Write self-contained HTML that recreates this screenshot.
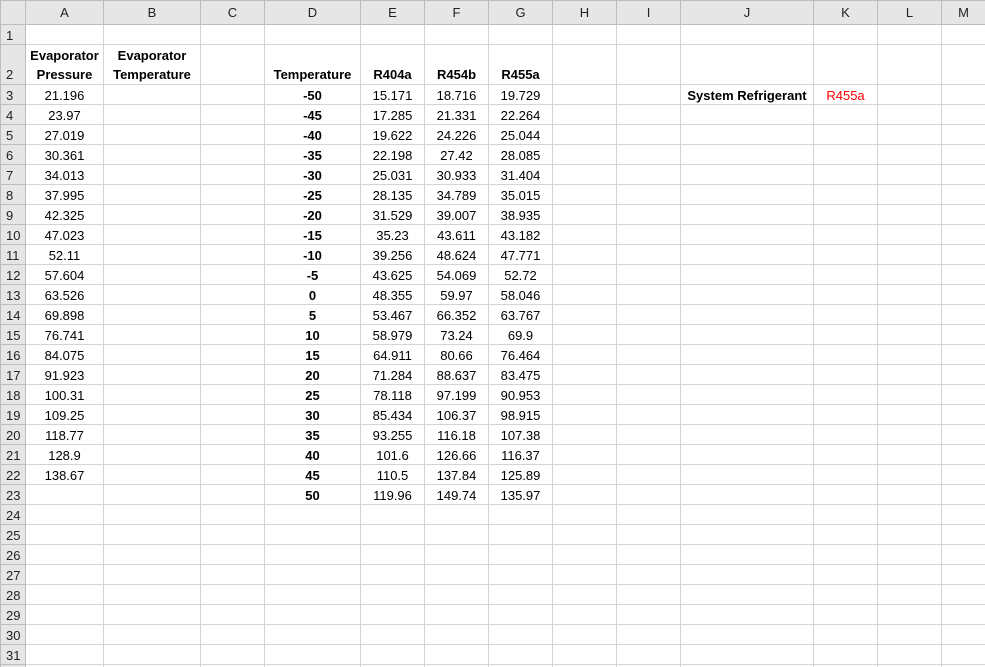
<!DOCTYPE html>
<html><head><meta charset="utf-8"><style>
html,body{margin:0;padding:0;background:#fff;overflow:hidden;width:985px;height:667px}
table{border-collapse:collapse;table-layout:fixed;width:985px;font-family:"Liberation Sans",Arial,sans-serif;font-size:13px;color:#000}
td{border:1px solid #d4d4d4;padding:0 2px;height:19px;text-align:center;vertical-align:bottom;white-space:nowrap;overflow:hidden;line-height:17px}
tr.h td{background:#e6e6e6;border-color:#bdbdbd;height:23px;vertical-align:middle;color:#222}
td.r{background:#e6e6e6;border-color:#bdbdbd;text-align:left;padding-left:5px;color:#222}
tr.t td{height:39px;line-height:19px}
.b{font-weight:bold}
.red{color:#f00}
</style></head><body>
<table>
<colgroup><col style="width:25px"><col style="width:78px"><col style="width:97px"><col style="width:64px"><col style="width:96px"><col style="width:64px"><col style="width:64px"><col style="width:64px"><col style="width:64px"><col style="width:64px"><col style="width:133px"><col style="width:64px"><col style="width:64px"><col style="width:44px"></colgroup>
<tr class="h"><td></td><td>A</td><td>B</td><td>C</td><td>D</td><td>E</td><td>F</td><td>G</td><td>H</td><td>I</td><td>J</td><td>K</td><td>L</td><td>M</td></tr>
<tr><td class="r">1</td><td></td><td></td><td></td><td></td><td></td><td></td><td></td><td></td><td></td><td></td><td></td><td></td><td></td></tr>
<tr class="t"><td class="r">2</td><td class="b">Evaporator<br>Pressure</td><td class="b">Evaporator<br>Temperature</td><td></td><td class="b">Temperature</td><td class="b">R404a</td><td class="b">R454b</td><td class="b">R455a</td><td></td><td></td><td></td><td></td><td></td><td></td></tr>
<tr><td class="r">3</td><td>21.196</td><td></td><td></td><td class="b">-50</td><td>15.171</td><td>18.716</td><td>19.729</td><td></td><td></td><td class="b">System Refrigerant</td><td class="red">R455a</td><td></td><td></td></tr>
<tr><td class="r">4</td><td>23.97</td><td></td><td></td><td class="b">-45</td><td>17.285</td><td>21.331</td><td>22.264</td><td></td><td></td><td></td><td></td><td></td><td></td></tr>
<tr><td class="r">5</td><td>27.019</td><td></td><td></td><td class="b">-40</td><td>19.622</td><td>24.226</td><td>25.044</td><td></td><td></td><td></td><td></td><td></td><td></td></tr>
<tr><td class="r">6</td><td>30.361</td><td></td><td></td><td class="b">-35</td><td>22.198</td><td>27.42</td><td>28.085</td><td></td><td></td><td></td><td></td><td></td><td></td></tr>
<tr><td class="r">7</td><td>34.013</td><td></td><td></td><td class="b">-30</td><td>25.031</td><td>30.933</td><td>31.404</td><td></td><td></td><td></td><td></td><td></td><td></td></tr>
<tr><td class="r">8</td><td>37.995</td><td></td><td></td><td class="b">-25</td><td>28.135</td><td>34.789</td><td>35.015</td><td></td><td></td><td></td><td></td><td></td><td></td></tr>
<tr><td class="r">9</td><td>42.325</td><td></td><td></td><td class="b">-20</td><td>31.529</td><td>39.007</td><td>38.935</td><td></td><td></td><td></td><td></td><td></td><td></td></tr>
<tr><td class="r">10</td><td>47.023</td><td></td><td></td><td class="b">-15</td><td>35.23</td><td>43.611</td><td>43.182</td><td></td><td></td><td></td><td></td><td></td><td></td></tr>
<tr><td class="r">11</td><td>52.11</td><td></td><td></td><td class="b">-10</td><td>39.256</td><td>48.624</td><td>47.771</td><td></td><td></td><td></td><td></td><td></td><td></td></tr>
<tr><td class="r">12</td><td>57.604</td><td></td><td></td><td class="b">-5</td><td>43.625</td><td>54.069</td><td>52.72</td><td></td><td></td><td></td><td></td><td></td><td></td></tr>
<tr><td class="r">13</td><td>63.526</td><td></td><td></td><td class="b">0</td><td>48.355</td><td>59.97</td><td>58.046</td><td></td><td></td><td></td><td></td><td></td><td></td></tr>
<tr><td class="r">14</td><td>69.898</td><td></td><td></td><td class="b">5</td><td>53.467</td><td>66.352</td><td>63.767</td><td></td><td></td><td></td><td></td><td></td><td></td></tr>
<tr><td class="r">15</td><td>76.741</td><td></td><td></td><td class="b">10</td><td>58.979</td><td>73.24</td><td>69.9</td><td></td><td></td><td></td><td></td><td></td><td></td></tr>
<tr><td class="r">16</td><td>84.075</td><td></td><td></td><td class="b">15</td><td>64.911</td><td>80.66</td><td>76.464</td><td></td><td></td><td></td><td></td><td></td><td></td></tr>
<tr><td class="r">17</td><td>91.923</td><td></td><td></td><td class="b">20</td><td>71.284</td><td>88.637</td><td>83.475</td><td></td><td></td><td></td><td></td><td></td><td></td></tr>
<tr><td class="r">18</td><td>100.31</td><td></td><td></td><td class="b">25</td><td>78.118</td><td>97.199</td><td>90.953</td><td></td><td></td><td></td><td></td><td></td><td></td></tr>
<tr><td class="r">19</td><td>109.25</td><td></td><td></td><td class="b">30</td><td>85.434</td><td>106.37</td><td>98.915</td><td></td><td></td><td></td><td></td><td></td><td></td></tr>
<tr><td class="r">20</td><td>118.77</td><td></td><td></td><td class="b">35</td><td>93.255</td><td>116.18</td><td>107.38</td><td></td><td></td><td></td><td></td><td></td><td></td></tr>
<tr><td class="r">21</td><td>128.9</td><td></td><td></td><td class="b">40</td><td>101.6</td><td>126.66</td><td>116.37</td><td></td><td></td><td></td><td></td><td></td><td></td></tr>
<tr><td class="r">22</td><td>138.67</td><td></td><td></td><td class="b">45</td><td>110.5</td><td>137.84</td><td>125.89</td><td></td><td></td><td></td><td></td><td></td><td></td></tr>
<tr><td class="r">23</td><td></td><td></td><td></td><td class="b">50</td><td>119.96</td><td>149.74</td><td>135.97</td><td></td><td></td><td></td><td></td><td></td><td></td></tr>
<tr><td class="r">24</td><td></td><td></td><td></td><td></td><td></td><td></td><td></td><td></td><td></td><td></td><td></td><td></td><td></td></tr>
<tr><td class="r">25</td><td></td><td></td><td></td><td></td><td></td><td></td><td></td><td></td><td></td><td></td><td></td><td></td><td></td></tr>
<tr><td class="r">26</td><td></td><td></td><td></td><td></td><td></td><td></td><td></td><td></td><td></td><td></td><td></td><td></td><td></td></tr>
<tr><td class="r">27</td><td></td><td></td><td></td><td></td><td></td><td></td><td></td><td></td><td></td><td></td><td></td><td></td><td></td></tr>
<tr><td class="r">28</td><td></td><td></td><td></td><td></td><td></td><td></td><td></td><td></td><td></td><td></td><td></td><td></td><td></td></tr>
<tr><td class="r">29</td><td></td><td></td><td></td><td></td><td></td><td></td><td></td><td></td><td></td><td></td><td></td><td></td><td></td></tr>
<tr><td class="r">30</td><td></td><td></td><td></td><td></td><td></td><td></td><td></td><td></td><td></td><td></td><td></td><td></td><td></td></tr>
<tr><td class="r">31</td><td></td><td></td><td></td><td></td><td></td><td></td><td></td><td></td><td></td><td></td><td></td><td></td><td></td></tr>
<tr><td class="r">32</td><td></td><td></td><td></td><td></td><td></td><td></td><td></td><td></td><td></td><td></td><td></td><td></td><td></td></tr>
</table>
</body></html>
